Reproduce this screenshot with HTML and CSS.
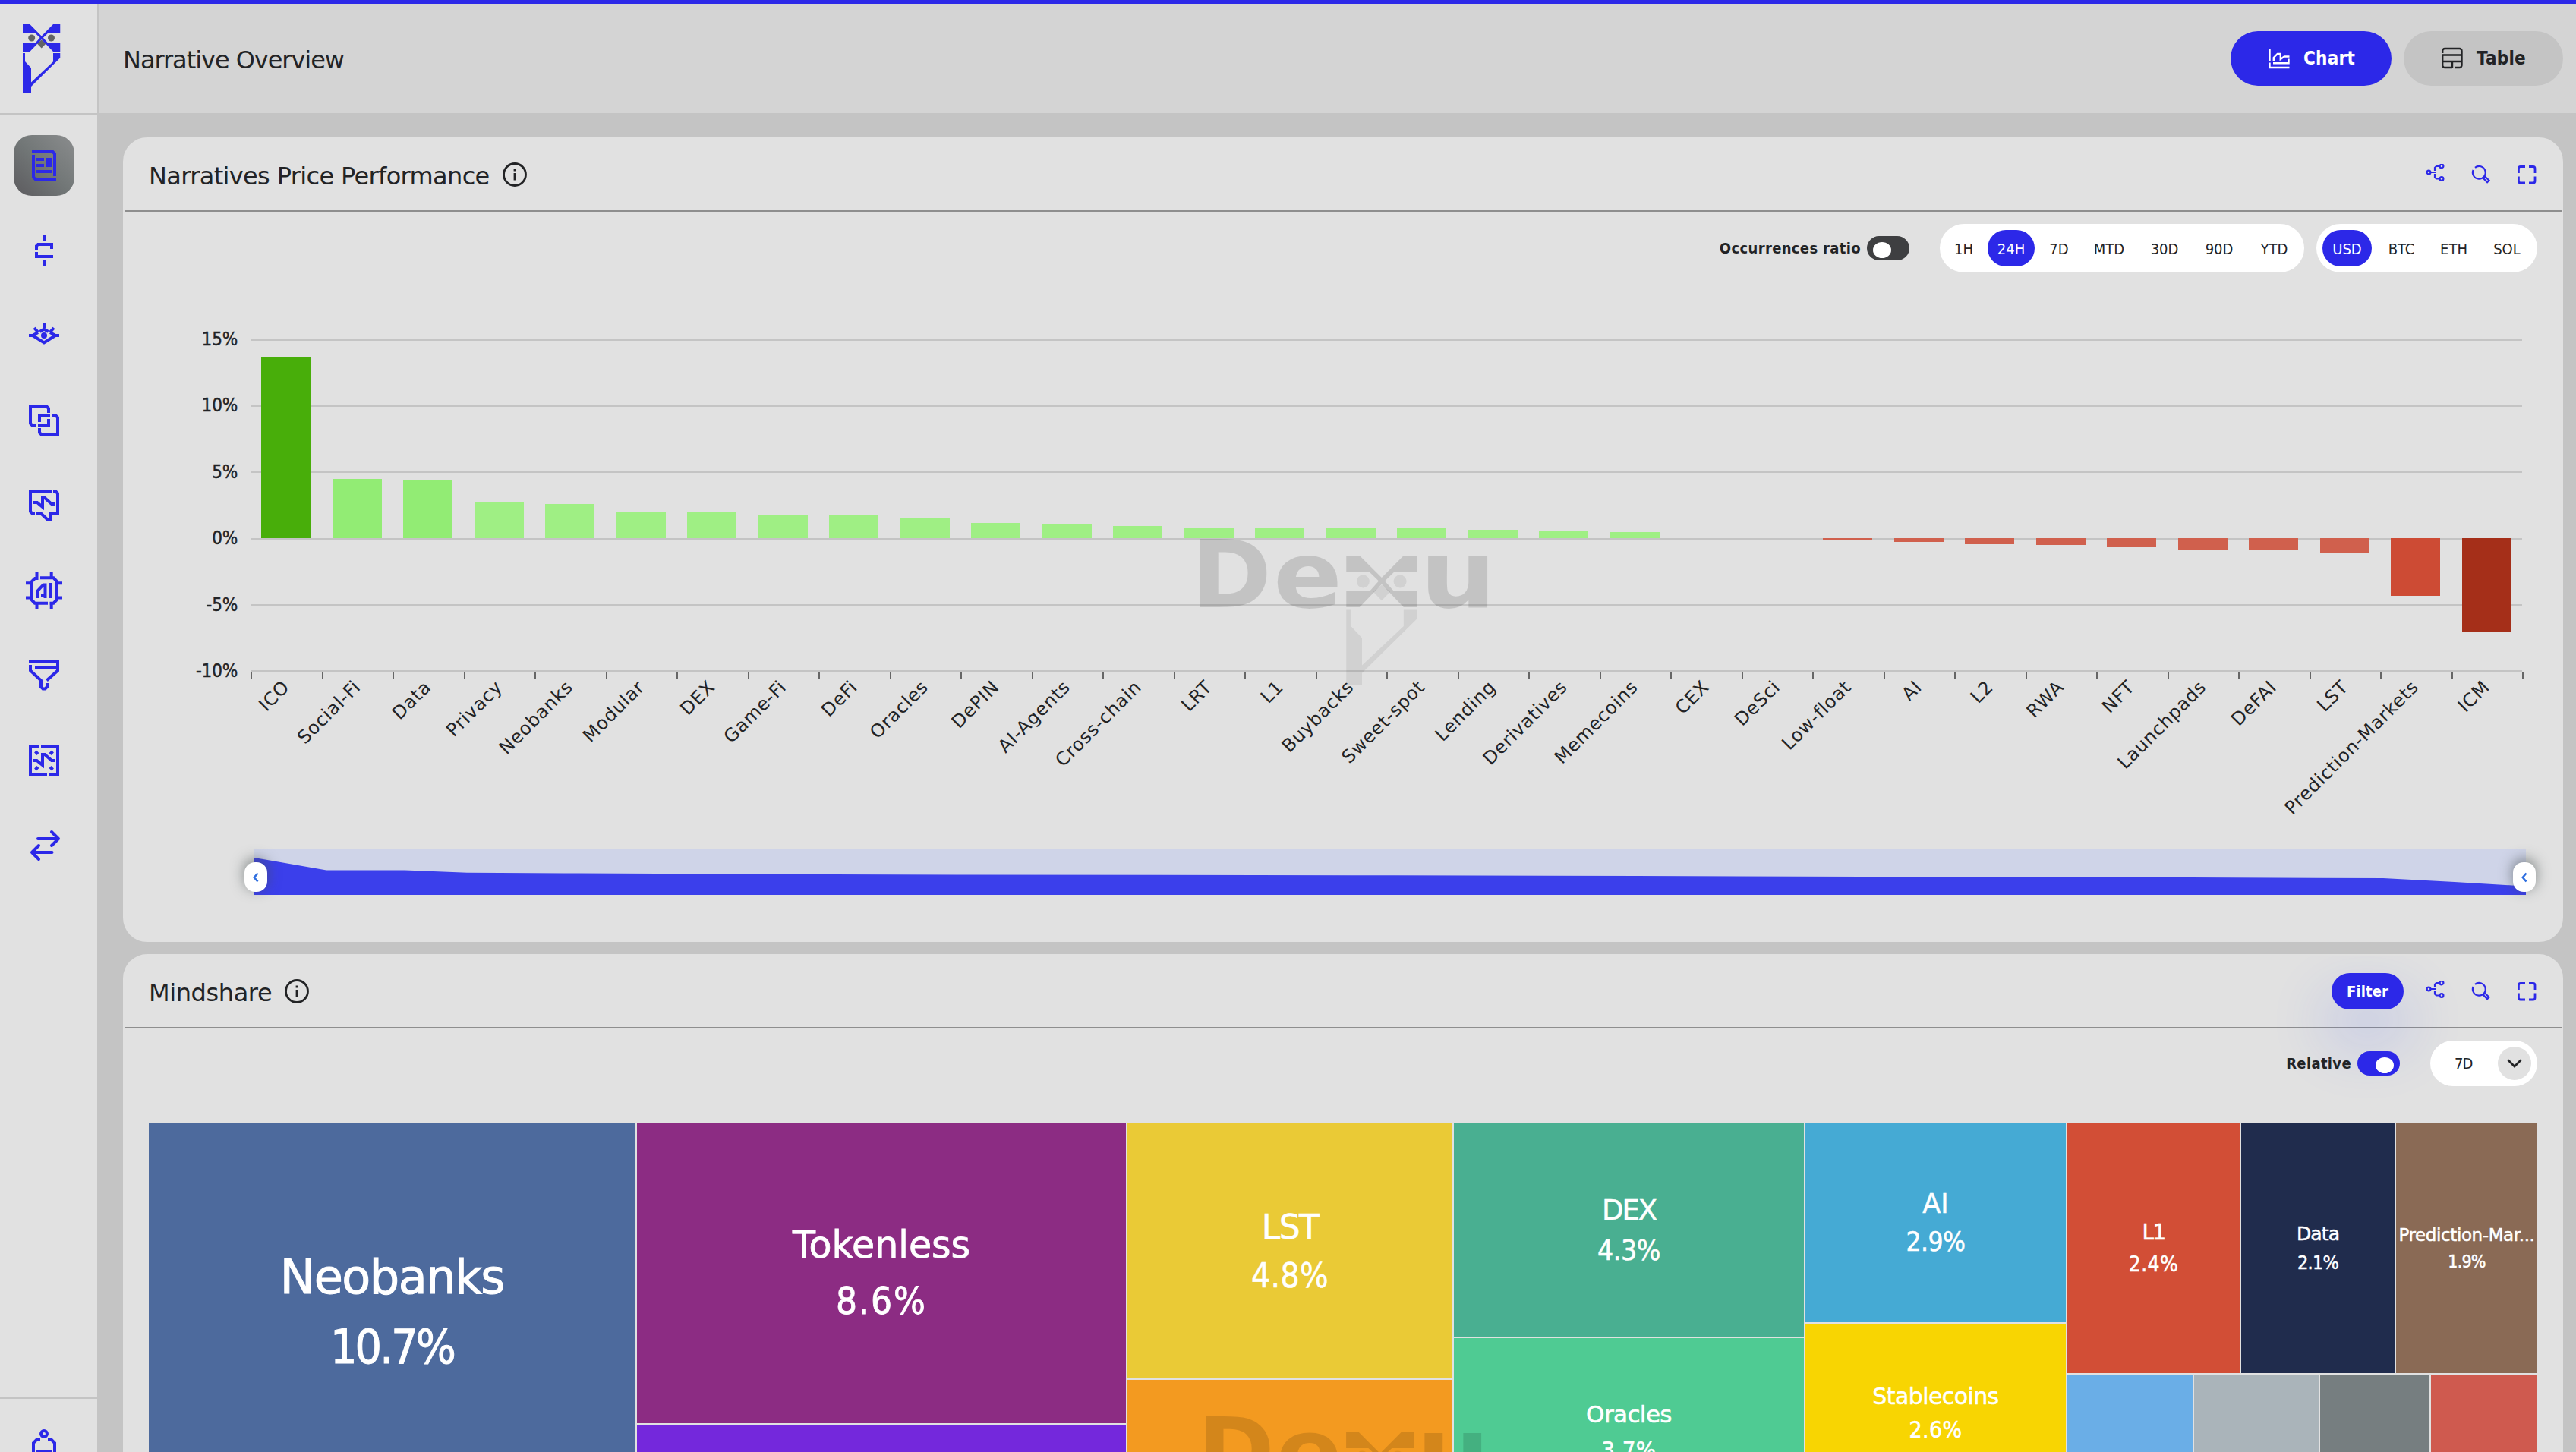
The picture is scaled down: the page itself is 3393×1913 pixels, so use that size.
FILE: index.html
```html
<!DOCTYPE html>
<html lang="en">
<head>
<meta charset="utf-8">
<title>Narrative Overview</title>
<link rel="stylesheet" href="styles.css">
</head>
<body>
<svg class="defs" aria-hidden="true">
  <symbol id="owl" viewBox="0 0 49.5 90">
    <path class="owl-soft" d="M24.7 20.5l6 4.7-6 6.2-6-6.2z"/>
    <circle class="owl-soft" cx="11.7" cy="18" r="4.5"/><circle class="owl-soft" cx="37.5" cy="18" r="4.5"/>
    <path class="owl-main" d="M0 0H9.3L24.7 15.4 40 0h9.5v11.5H33.3l-6.4 6.2 6 6.8h16.6V36H40L24.7 20 9.3 36H0V24.5h16.6l6-6.8-6.4-6.2H0z"/>
    <path class="owl-body" d="M0 37.9h3V49l8 8.4v19.1L40 49.2V37.9h9.5V44L11 81.9V90H0z"/>
  </symbol>
  <symbol id="share" viewBox="0 0 28 28"><g fill="none" stroke="currentColor" stroke-width="2.2"><circle cx="5" cy="11" r="2.4"/><circle cx="22" cy="2.9" r="2.4"/><circle cx="22" cy="19.5" r="2.4"/><path d="M7.5 11H14M13 9V5l2-2h4.5M13 13v4.500l2 2h4.500"/></g></symbol>
  <symbol id="search" viewBox="0 0 28 28"><g fill="none" stroke="currentColor" stroke-width="2.2"><path d="M3.600 8A8.400 8.400 0 1 0 6 4.800"/><path d="M16.800 18.800l2.300-2.300 5.400 5.200-2.400 2.400z"/></g></symbol>
  <symbol id="expand" viewBox="0 0 28 28"><path fill="none" stroke="currentColor" stroke-width="2.8" d="M3.400 12V6a2.500 2.500 0 0 1 2.500-2.500H12M17 3.500h5.500A2.500 2.500 0 0 1 25 6v6M25 16.500v6a2.500 2.500 0 0 1-2.500 2.500H17M12 25H5.900a2.500 2.500 0 0 1-2.500-2.500v-6"/></symbol>
  <symbol id="info" viewBox="0 0 32 32"><g fill="none" stroke="currentColor" stroke-width="2.800"><circle cx="16" cy="16" r="14.500"/><path d="M16 14v9.500M16 8.500v3"/></g></symbol>
</svg>

<div class="progress"></div>
<div class="app">
  <aside class="sidebar">
    <div class="brand"><svg class="brand-logo"><use href="#owl"/></svg></div>
    <nav class="nav">
      <a class="nav-item active"><svg class="nav-icon" viewBox="0 0 48 48"><path d="M8 6H35.500L38 8.500V38M10 10V39.500L12.500 42H40M14 16H24M14 24H24M14 32H34"/><path class="solid" d="M26 14h8v12h-8z"/></svg></a>
      <a class="nav-item"><svg class="nav-icon" viewBox="0 0 48 48"><path d="M24 4v8M24 36v8M14 24v-6l2-2H34v6M14 26v6H36"/></svg></a>
      <a class="nav-item"><svg class="nav-icon" viewBox="0 0 48 48"><path d="M4 24H9M39 24H44M16 20L9 24 24 33.500 39 24 32 20M24 8v6M18.500 19L24 15.500 29.500 19M11 14l5 5.500M37 14l-5 5.500"/><circle class="solid" cx="24" cy="24" r="4"/></svg></a>
      <a class="nav-item"><svg class="nav-icon" viewBox="0 0 48 48"><path d="M30 14V8l-2-2H6V28l2 2h6M18 34v6l2 2H42V20l-2-2h-6M18 26V18H32M30 22v8H16"/></svg></a>
      <a class="nav-item"><svg class="nav-icon" viewBox="0 0 48 48"><path d="M34 6H6V32l2 2h4M36 6h4l2 2v26H32v8h-4l-8.500-8H14M10 20h5l7 6V14h3l9 8h4"/></svg></a>
      <a class="nav-item"><svg class="nav-icon" viewBox="0 0 48 48"><path d="M14.500 0v8L12 8 7.300 12.500V36l4.500 4.700H29M33.700 0v7.500M19 7.300H36.500L41 12V36l-4.500 4.700H31.500M14.500 41v7M33.700 41v7M0 14.300H7M41 14.300h7M0 33.500H7M41 33.500h7"/><path d="M15 34V25l8-8.500h2.500V34M20 30h5M32.500 14V34"/></svg></a>
      <a class="nav-item"><svg class="nav-icon" viewBox="0 0 48 48"><path d="M4 6H42V17.500L27.500 30.500M12 14H42M6 10v7.500L20 30.500V39l2.500 2.500h3L28 39v-5"/></svg></a>
      <a class="nav-item"><svg class="nav-icon" viewBox="0 0 48 48"><path d="M18 6H6V42H28M20 6H42V42H30M10 24h4.500L22 30V16h3l9 8h4M12.500 12l3.500 3.500M35.500 12L32 15.500M12.500 36l3.500-3.500M35.500 36L32 32.500"/></svg></a>
      <a class="nav-item"><svg class="nav-icon round" viewBox="0 0 48 48"><path d="M16 15H42M34 6l9 9-9 9M34.500 33H8M17 24l-9 9 9 9"/></svg></a>
    </nav>
    <div class="account"><svg class="nav-icon" viewBox="0 0 48 48"><circle cx="24" cy="10" r="4"/><path d="M19 18h-5l-4 4V46H38V22l-4-4h-5M14 33.500H34"/></svg></div>
  </aside>

  <main class="main">
    <header class="header">
      <h1 class="title">Narrative Overview</h1>
      <div class="view-switch">
        <button class="view primary"><svg class="view-icon" viewBox="0 0 32 32"><path d="M3.500 3V20M3.500 21.500V28H29.500M8.800 19.500V15l5-5h4v7l5-3.500h6.700M28.500 16.500v5.800H8"/></svg>Chart</button>
        <button class="view table"><svg class="view-icon" viewBox="0 0 32 32"><path d="M3.200 9V6a3 3 0 0 1 3-3h19.300a3 3 0 0 1 3 3v19a3 3 0 0 1-3 3H19M16 28H6.200a3 3 0 0 1-3-3V11.500H28.500M3.200 20H28.500M16 20v8"/></svg>Table</button>
      </div>
    </header>

    <div class="content">
      <section class="card performance">
        <div class="card-head">
          <h2 class="card-title">Narratives Price Performance</h2><svg class="info"><use href="#info"/></svg>
          <div class="actions"><svg><use href="#share"/></svg><svg><use href="#search"/></svg><svg><use href="#expand"/></svg></div>
        </div>
        <div class="controls">
          <div class="toggle-label">Occurrences ratio<span class="toggle"><i></i></span></div>
          <div class="pills periods"><span>1H</span><span class="on">24H</span><span>7D</span><span>MTD</span><span>30D</span><span>90D</span><span>YTD</span></div>
          <div class="pills currencies"><span class="on">USD</span><span>BTC</span><span>ETH</span><span>SOL</span></div>
        </div>
        <div class="chart">
          <div class="y-axis"><span>15%</span><span>10%</span><span>5%</span><span>0%</span><span>-5%</span><span>-10%</span></div>
          <div class="plot">
            <div class="bars-area">
              <div class="gridlines"><i></i><i></i><i></i><i></i><i></i><i></i></div>
              <svg class="watermark" viewBox="0 0 400 192">
                <text class="wm-text" x="0" y="90" font-size="123" textLength="106" lengthAdjust="spacingAndGlyphs">D</text>
                <text class="wm-text" x="108" y="90" font-size="121" textLength="91" lengthAdjust="spacingAndGlyphs">e</text>
                <use href="#owl" x="204" y="22" width="94" height="170"/>
                <text class="wm-text" x="301" y="90" font-size="123" textLength="101" lengthAdjust="spacingAndGlyphs">u</text>
              </svg>
              <div class="bars">
                <i class="up strong" style="height:239px"></i><i class="up mid" style="height:78px"></i><i class="up mid" style="height:76px"></i><i class="up" style="height:47px"></i>
                <i class="up" style="height:45px"></i><i class="up" style="height:35px"></i><i class="up" style="height:34px"></i><i class="up" style="height:31px"></i>
                <i class="up" style="height:30px"></i><i class="up" style="height:27px"></i><i class="up" style="height:20px"></i><i class="up" style="height:18px"></i>
                <i class="up" style="height:16px"></i><i class="up" style="height:14px"></i><i class="up" style="height:14px"></i><i class="up" style="height:13px"></i>
                <i class="up" style="height:13px"></i><i class="up" style="height:11px"></i><i class="up" style="height:9px"></i><i class="up" style="height:8px"></i>
                <i></i><i></i><i class="down" style="height:3px"></i><i class="down" style="height:5px"></i>
                <i class="down" style="height:8px"></i><i class="down" style="height:9px"></i><i class="down" style="height:12px"></i><i class="down" style="height:15px"></i>
                <i class="down" style="height:16px"></i><i class="down" style="height:19px"></i><i class="down mid" style="height:76px"></i><i class="down strong" style="height:123px"></i>
              </div>
            </div>
            <div class="x-axis">
              <div><span>ICO</span></div><div><span>Social-Fi</span></div><div><span>Data</span></div><div><span>Privacy</span></div><div><span>Neobanks</span></div><div><span>Modular</span></div><div><span>DEX</span></div><div><span>Game-Fi</span></div>
              <div><span>DeFi</span></div><div><span>Oracles</span></div><div><span>DePIN</span></div><div><span>AI-Agents</span></div><div><span>Cross-chain</span></div><div><span>LRT</span></div><div><span>L1</span></div><div><span>Buybacks</span></div>
              <div><span>Sweet-spot</span></div><div><span>Lending</span></div><div><span>Derivatives</span></div><div><span>Memecoins</span></div><div><span>CEX</span></div><div><span>DeSci</span></div><div><span>Low-float</span></div><div><span>AI</span></div>
              <div><span>L2</span></div><div><span>RWA</span></div><div><span>NFT</span></div><div><span>Launchpads</span></div><div><span>DeFAI</span></div><div><span>LST</span></div><div><span>Prediction-Markets</span></div><div><span>ICM</span></div>
            </div>
            <div class="range">
              <svg class="range-area" viewBox="0 0 2992 60"><path d="M0 60V11L95 27.500H198L280 30.800 408 31.500 632 32.500 925 33.500 1500 34.300 1820 35 2115 36 2550 37 2804 38 2898 43 2974 47.500 2992 48.500V60z"/></svg>
              <div class="handle left"><svg viewBox="0 0 8 14"><path d="M6.500 1.500L1.800 7l4.700 5.500"/></svg></div>
              <div class="handle right"><svg viewBox="0 0 8 14"><path d="M6.500 1.500L1.800 7l4.700 5.500"/></svg></div>
            </div>
          </div>
        </div>
      </section>

      <section class="card mindshare">
        <div class="card-head">
          <h2 class="card-title">Mindshare</h2><svg class="info"><use href="#info"/></svg>
          <div class="actions"><button class="filter">Filter</button><svg><use href="#share"/></svg><svg><use href="#search"/></svg><svg><use href="#expand"/></svg></div>
        </div>
        <div class="controls">
          <div class="toggle-label">Relative<span class="toggle checked"><i></i></span></div>
          <div class="select"><span>7D</span><b><svg viewBox="0 0 20 12"><path d="M1.500 1.500L10 10l8.500-8.500"/></svg></b></div>
        </div>
        <div class="treemap">
          <div class="col c1"><div class="tile neobanks"><span>Neobanks</span><span class="pct">10.7%</span></div></div>
          <div class="col c2"><div class="tile tokenless"><span>Tokenless</span><span class="pct">8.6%</span></div><div class="tile violet"></div></div>
          <div class="col c3"><div class="tile lst"><span>LST</span><span class="pct">4.8%</span></div><div class="tile orange"></div></div>
          <div class="col c4"><div class="tile dex"><span>DEX</span><span class="pct">4.3%</span></div><div class="tile oracles"><span>Oracles</span><span class="pct">3.7%</span></div></div>
          <div class="col c5"><div class="tile ai"><span>AI</span><span class="pct">2.9%</span></div><div class="tile stable"><span>Stablecoins</span><span class="pct">2.6%</span></div></div>
          <div class="col c6">
            <div class="row top"><div class="tile l1"><span>L1</span><span class="pct">2.4%</span></div><div class="tile data"><span>Data</span><span class="pct">2.1%</span></div><div class="tile pred"><span>Prediction-Mar...</span><span class="pct">1.9%</span></div></div>
            <div class="row bottom"><div class="tile sky"></div><div class="tile silver"></div><div class="tile slate"></div><div class="tile coral"></div></div>
          </div>
          <svg class="watermark tm" viewBox="0 0 400 192">
            <text class="wm-text" x="0" y="90" font-size="123" textLength="106" lengthAdjust="spacingAndGlyphs">D</text>
            <text class="wm-text" x="108" y="90" font-size="121" textLength="91" lengthAdjust="spacingAndGlyphs">e</text>
            <use href="#owl" x="204" y="22" width="94" height="170"/>
            <text class="wm-text" x="301" y="90" font-size="123" textLength="101" lengthAdjust="spacingAndGlyphs">u</text>
          </svg>
        </div>
      </section>
    </div>
  </main>
</div>
</body>
</html>
```
FILE: styles.css
```css
* { box-sizing: border-box; }
html, body { margin: 0; height: 1913px; overflow: hidden; }
body {
  font-family: "DejaVu Sans", sans-serif;
  font-stretch: condensed;
  color: #222325;
  background: #c4c4c4;
  display: flex;
  flex-direction: column;
}
button { font: inherit; border: 0; }
i { font-style: normal; }
.defs { position: absolute; width: 0; height: 0; }
.progress { height: 5px; background: #2c28e8; flex: none; }
.app { display: flex; height: 1908px; flex: none; overflow: hidden; }

/* Sidebar */
.sidebar { width: 130px; flex: none; background: #e1e1e1; border-right: 2px solid #c4c4c4; display: flex; flex-direction: column; color: #2c28e8; }
.brand { height: 146px; flex: none; border-bottom: 2px solid #c4c4c4; padding: 27px 0 0 30px; }
.brand-logo { display: block; width: 49.5px; height: 90px; fill: #2c28e8; --soft: #626365; }
.owl-soft { fill: var(--soft); }
.owl-body { fill: var(--body, inherit); }
.nav { flex: 1; display: flex; flex-direction: column; gap: 32px; padding: 27px 0 0 18px; }
.nav-item { width: 80px; height: 80px; border-radius: 24px; display: flex; align-items: center; justify-content: center; }
.nav-item.active { background: linear-gradient(45deg, #606063 10%, #727777 50%, #8b8d8e 100%); }
.nav-icon { width: 48px; height: 48px; display: block; fill: none; stroke: #2c28e8; stroke-width: 4; }
.nav-icon.round { stroke-linecap: round; stroke-linejoin: round; }
.nav-icon .solid { fill: #2c28e8; stroke: none; }
.account { height: 72px; flex: none; border-top: 2px solid #c4c4c4; padding: 36px 0 0 34px; overflow: hidden; }

/* Header */
.main { flex: 1; min-width: 0; }
.header { height: 144px; background: #d4d4d4; display: flex; align-items: center; justify-content: space-between; padding: 0 17px 0 32px; }
.title { margin: 0; padding-top: 3px; font-size: 32px; font-weight: 400; line-height: 40px; font-stretch: normal; letter-spacing: -1.05px; }
.view-switch { display: flex; gap: 16px; }
.view { height: 72px; border-radius: 36px; display: flex; align-items: center; justify-content: flex-start; gap: 16px; font-weight: 700; font-size: 24px; letter-spacing: .25px; padding: 0 0 0 48px; }
.view.primary { width: 212px; background: #2c28e8; color: #fff; }
.view.table { width: 210px; background: #c4c4c4; color: #222325; }
.view-icon { width: 32px; height: 32px; fill: none; stroke: currentColor; stroke-width: 2.4; }

/* Cards */
.content { padding: 32px 17px 0 32px; display: flex; flex-direction: column; gap: 16px; }
.card { background: #e1e1e1; border: 2px solid #e1e1e1; border-radius: 32px; flex: none; }
.performance { height: 1060px; }
.mindshare { height: 656px; border-bottom: 0; border-radius: 32px 32px 0 0; overflow: hidden; }
.card-head { height: 96px; border-bottom: 2px solid #8e8e8e; display: flex; align-items: center; padding: 0 32px; }
.card-title { margin: 0; padding-top: 3px; font-size: 32px; line-height: 40px; font-weight: 400; font-stretch: normal; letter-spacing: -.65px; }
.mindshare .card-title { letter-spacing: -.4px; }
.info { width: 32px; height: 32px; margin-left: 17px; }
.actions { margin-left: auto; display: flex; align-items: center; gap: 32px; color: #2c28e8; }
.actions svg { width: 28px; height: 28px; display: block; }
.filter { width: 95px; height: 48px; margin-right: -4px; border-radius: 24px; background: #2c28e8; color: #fff; font-weight: 700; font-size: 20px; letter-spacing: .1px; padding: 0; box-shadow: 0 38px 72px 16px rgba(44, 80, 255, .13); }
.controls { display: flex; justify-content: flex-end; align-items: center; padding: 16px 32px 0; }
.toggle-label { display: flex; align-items: center; gap: 8px; font-weight: 700; font-size: 20px; letter-spacing: .35px; margin-right: 40px; }
.toggle { width: 56px; height: 32px; border-radius: 16px; background: #3e3f41; padding: 8px 8px 0; }
.toggle i { display: block; width: 24px; height: 21px; border-radius: 50%; background: #fff; }
.toggle.checked { background: #2c28e8; }
.toggle.checked i { margin-left: 16px; }
.pills { height: 64px; border-radius: 32px; background: #fff; padding: 8px; display: grid; gap: 8px; font-size: 20px; letter-spacing: 0; }
.periods { grid-template-columns: 47px 62px 48px 68px 62px 66px 63px; margin-right: 16px; }
.currencies { grid-template-columns: 65px 62px 60px 64px; }
.pills span { border-radius: 24px; padding-top: 1px; display: flex; align-items: center; justify-content: center; }
.pills .on { background: #2c28e8; color: #fff; }
.select { width: 141px; height: 60px; border-radius: 30px; background: #fff; display: flex; align-items: center; justify-content: space-between; padding: 0 8px 0 32px; font-size: 20px; letter-spacing: -1px; }
.select b { width: 44px; height: 44px; border-radius: 50%; background: #e1e1e1; display: flex; align-items: center; justify-content: center; }
.select svg { width: 20px; height: 12px; fill: none; stroke: #222325; stroke-width: 2.8; }

/* Bar chart */
.chart { display: flex; margin-top: 76px; }
.y-axis { width: 149px; height: 461px; flex: none; display: flex; flex-direction: column; justify-content: space-between; text-align: right; font-size: 24px; line-height: 24px; letter-spacing: -.2px; -webkit-text-stroke: .4px currentColor; }
.plot { width: 2992px; margin-left: 17px; padding-top: 12px; }
.bars-area { position: relative; height: 438px; }
.gridlines { height: 438px; display: flex; flex-direction: column; justify-content: space-between; }
.gridlines i { height: 2px; background: #c4c4c4; }
.bars { position: absolute; inset: 0; display: grid; grid-template-columns: repeat(32, 93.5px); grid-template-rows: 262px 176px; justify-items: center; }
.bars i { width: 65px; grid-row: 1; }
.bars .up { align-self: end; background: #9fef84; }
.bars .up.mid { background: #92ec74; }
.bars .up.strong { background: #48ae0a; }
.bars .down { align-self: start; transform: translateY(262px); background: #d0604d; }
.bars .down.mid { background: #cd4b34; }
.bars .down.strong { background: #a52f19; }
.watermark { position: absolute; left: 1239px; top: 263px; width: 400px; height: 192px; overflow: visible; fill: rgba(0, 0, 0, .13); --soft: rgba(0, 0, 0, .07); --body: rgba(0, 0, 0, .07); }
.wm-text { font-family: "DejaVu Sans", sans-serif; font-stretch: normal; font-weight: 700; }
.x-axis { height: 234px; display: grid; grid-template-columns: repeat(32, 93.5px); font-size: 24px; font-stretch: normal; letter-spacing: .8px; }
.x-axis div { position: relative; }
.x-axis div::before { content: ""; display: block; width: 2px; height: 10px; background: #666; }
.x-axis div:last-child::after { content: ""; position: absolute; right: -2px; top: 0; width: 2px; height: 10px; background: #666; }
.x-axis span { position: absolute; right: 50%; top: 2px; line-height: 28px; white-space: nowrap; transform-origin: 100% 50%; transform: rotate(-45deg); }
.range { position: relative; margin-left: 5px; width: 2992px; height: 60px; background: #cfd4e8; }
.range-area { display: block; width: 2992px; height: 60px; fill: #3b3feb; }
.handle { position: absolute; top: 17px; width: 30px; height: 39px; border-radius: 14px; background: #fff; box-shadow: 0 -4px 16px 2px rgba(70, 80, 80, .5); display: flex; align-items: center; justify-content: center; }
.handle.left { left: -13px; }
.handle.right { right: -13px; }
.handle svg { width: 8px; height: 14px; fill: none; stroke: #2f6fe0; stroke-width: 2.6; }

/* Treemap */
.treemap { position: relative; display: flex; gap: 2px; margin: 48px 32px 0; height: 434px; font-stretch: normal; }
.col { flex: none; display: flex; flex-direction: column; gap: 2px; }
.c1 { width: 641px; }
.c2 { width: 644px; }
.c3 { width: 428px; }
.c4 { width: 461px; }
.c5 { width: 343px; }
.c6 { width: 619px; }
.row { display: flex; gap: 2px; flex: none; }
.tile { display: flex; flex-direction: column; align-items: center; justify-content: center; color: #fff; white-space: nowrap; flex: none; padding-top: 2px; -webkit-text-stroke: .5px currentColor; }
.pct { font-stretch: condensed; letter-spacing: .4px; }
.neobanks { height: 499px; background: #4d6a9d; font-size: 62px; line-height: 92px; letter-spacing: -1.5px; padding-top: 0; -webkit-text-stroke-width: 1px; }
.neobanks .pct { letter-spacing: -2.8px; }
.tokenless { height: 396px; background: #8c2c83; font-size: 49px; line-height: 74px; -webkit-text-stroke-width: .8px; }
.tokenless .pct { letter-spacing: 2px; }
.violet { height: 160px; background: #7428dc; }
.lst { height: 337px; background: #eaca36; font-size: 44px; line-height: 64px; letter-spacing: -1.6px; }
.orange { height: 220px; background: #f39a20; }
.dex { height: 282px; background: #49af91; font-size: 37px; line-height: 53px; letter-spacing: -2px; }
.dex .pct { letter-spacing: -.4px; }
.oracles { height: 246px; background: #4fcb93; font-size: 31px; line-height: 47px; letter-spacing: -.6px; }
.ai { height: 263px; background: #45aad4; font-size: 35px; line-height: 50px; padding-top: 0; }
.ai .pct { letter-spacing: -.5px; }
.stable { height: 236px; background: #f8d502; font-size: 30px; line-height: 44px; letter-spacing: -.6px; padding-top: 0; }
.row.top { height: 330px; }
.row.bottom { height: 200px; }
.l1 { width: 227px; background: #d24e36; font-size: 28px; line-height: 42px; letter-spacing: -1.6px; }
.data { width: 202px; background: #202c4d; font-size: 25px; line-height: 38px; letter-spacing: -.9px; }
.data .pct, .pred .pct { letter-spacing: -.8px; }
.pred { width: 186px; background: #8a6a55; font-size: 23px; line-height: 35px; letter-spacing: -.4px; }
.sky { width: 165px; background: #6aaee7; }
.silver { width: 164px; background: #aab4ba; }
.slate { width: 144px; background: #767e80; }
.coral { width: 140px; background: #cf5a4f; }
.watermark.tm { left: 1381px; top: 387px; width: 384px; height: 184px; }
```
